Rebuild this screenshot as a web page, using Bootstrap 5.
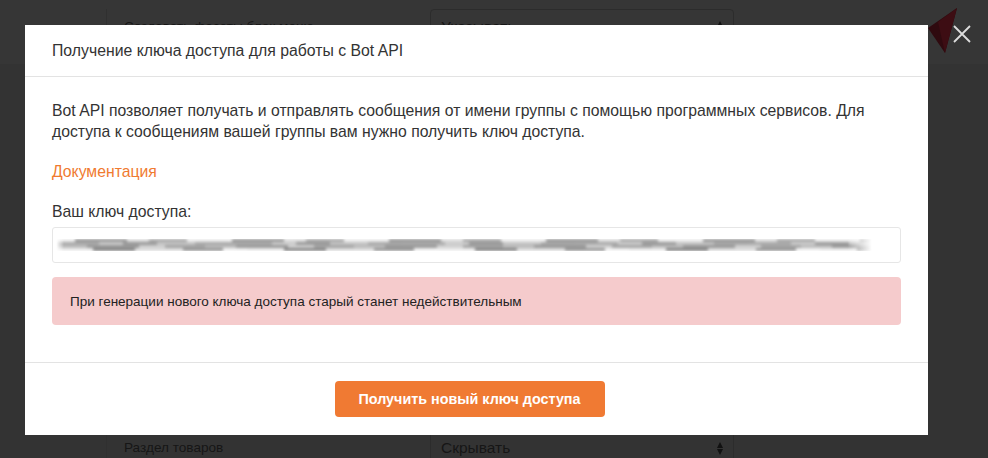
<!DOCTYPE html>
<html lang="ru">
<head>
<meta charset="utf-8">
<title>Bot API</title>
<link rel="stylesheet" href="https://cdn.jsdelivr.net/npm/bootstrap@5.3.0/dist/css/bootstrap.min.css">
<style>
html,body{height:100%;overflow:hidden}
body{background:#333;font-family:"Liberation Sans",Arial,sans-serif;color:#161616}
.page-back{height:458px;padding-left:106px;padding-right:62px;display:flex;flex-direction:column;justify-content:space-between;background:linear-gradient(#363636 0 64px,#333 64px)}
.back-row{height:36px;font-size:13.6px;color:#161616;align-items:center;border-left:1px solid #303030}
.back-row>.back-label{width:323px;padding-left:17px}
.back-row>.back-select{width:304px;padding:0 10px;font-size:15.5px;height:36px;border:1px solid #2c2c2c;border-radius:4px;display:flex;align-items:center;justify-content:space-between}
.sel-arrows{display:flex;flex-direction:column;gap:1px}
.sel-arrows i{display:block;width:0;height:0;border-left:3.5px solid transparent;border-right:3.5px solid transparent}
.sel-arrows i:first-child{border-bottom:6px solid #111}
.sel-arrows i:last-child{border-top:6px solid #111}
.top-row{margin-top:9px}
.bottom-row{margin-bottom:-8px}
.dlg-dialog{margin:25px 0 0 25px;width:903px;max-width:903px}
.dlg-box{height:410px;border:0;border-radius:0;color:#333;background:#fff}
.dlg-head{height:52px;padding:0 27px;border-bottom:1px solid #e3e3e3;border-radius:0}
.dlg-title{font-size:15.8px;font-weight:400;line-height:21px;margin:0}
.dlg-body{flex:none;height:286px;padding:23px 27px 0;font-size:15.75px;line-height:21px;border-bottom:1px solid #e3e3e3}
.intro{margin-bottom:19px;width:830px}
.doc-line{margin-bottom:19px}
.doc-link{color:#f07a30;text-decoration:none}
.key-label{display:block;margin-bottom:5px}
.key-box{height:36px;padding:0;border:1px solid #e6e6e6;border-radius:3px;position:relative;overflow:hidden;margin-bottom:14px}
.key-blur{position:absolute;left:3px;top:11px;width:816px;height:12px;filter:blur(1.8px);
  -webkit-mask-image:linear-gradient(90deg,transparent,#000 8px,#000 97%,transparent);mask-image:linear-gradient(90deg,transparent,#000 8px,#000 97%,transparent);
  background-repeat:no-repeat;
  background-size:100% 3px,100% 3px,100% 3px,100% 3px;
  background-position:0 0,0 3px,0 6px,0 9px;
  background-image:
   repeating-linear-gradient(90deg,#eee 0 19px,#999 19px 71px,#ddd 71px 93px,#aaa 93px 131px,#eee 131px 157px),
   repeating-linear-gradient(90deg,#aaa 0 43px,#ccc 43px 67px,#999 67px 101px,#c4c4c4 101px 139px,#a8a8a8 139px 173px),
   repeating-linear-gradient(90deg,#bbb 0 31px,#999 31px 83px,#d0d0d0 83px 109px,#a4a4a4 109px 149px),
   repeating-linear-gradient(90deg,#eee 0 37px,#888 37px 79px,#ddd 79px 127px,#999 127px 167px,#f4f4f4 167px 191px)}
.warn{height:48px;background:#f5cbcc;border:0;border-radius:4px;padding:0 18px;font-size:13.5px;color:#222;display:flex;align-items:center;margin:0}
.dlg-foot{flex:1;padding:0 14px 0 0;border:0;justify-content:center;align-items:center}
.dlg-foot>.go-btn{margin:0}
.go-btn{background:#f07a33;border:0;color:#fff;width:270px;height:36px;border-radius:4px;font-size:14.35px;font-weight:700;padding:2px 0 0}
.go-btn:hover{background:#e56d26;color:#fff}
.close-x{position:absolute;left:953px;top:25px;width:18px;height:18px;padding:0;background:none;border:0;line-height:0;z-index:1060}
.corner{position:absolute;left:928px;top:8px;z-index:1060}
</style>
</head>
<body>
<div class="page-back">
  <div class="d-flex back-row top-row"><span class="back-label">Создавать фасеты блок меню</span><span class="back-select">Указывать<span class="sel-arrows"><i></i><i></i></span></span></div>
  <div class="d-flex back-row bottom-row"><span class="back-label">Раздел товаров</span><span class="back-select">Скрывать<span class="sel-arrows"><i></i><i></i></span></span></div>
</div>
<svg class="corner" width="30" height="46" viewBox="0 0 30 46" aria-hidden="true"><path d="M0 20 29 0 17 45Z" fill="#2f0a0f"/><path d="M29 0 17 45 10 14Z" fill="#3d0d13"/></svg>
<button class="close-x" type="button" aria-label="Закрыть"><svg width="18" height="18" viewBox="0 0 18 18"><path d="M1 1 17 17M17 1 1 17" stroke="#ddd" stroke-width="1.8"/></svg></button>
<div class="modal d-block" role="dialog">
  <div class="modal-dialog dlg-dialog">
    <div class="modal-content dlg-box">
      <div class="modal-header dlg-head"><h5 class="modal-title dlg-title">Получение ключа доступа для работы с Bot API</h5></div>
      <div class="modal-body dlg-body">
        <p class="intro">Bot API позволяет получать и отправлять сообщения от имени группы с помощью программных сервисов. Для доступа к сообщениям вашей группы вам нужно получить ключ доступа.</p>
        <p class="doc-line"><a class="doc-link" href="#">Документация</a></p>
        <label class="form-label key-label">Ваш ключ доступа:</label>
        <div class="form-control key-box"><div class="key-blur"></div></div>
        <div class="alert alert-danger warn" role="alert">При генерации нового ключа доступа старый станет недействительным</div>
      </div>
      <div class="modal-footer dlg-foot"><button class="btn go-btn" type="button">Получить новый ключ доступа</button></div>
    </div>
  </div>
</div>
</body>
</html>
